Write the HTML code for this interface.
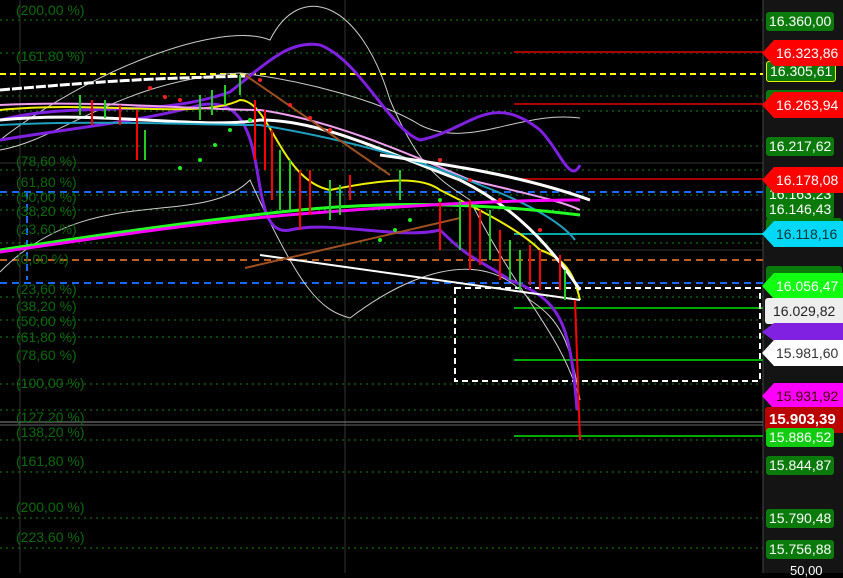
<!DOCTYPE html>
<html><head><style>
body{margin:0;background:#000;width:843px;height:573px;overflow:hidden;font-family:"Liberation Sans",sans-serif}
.l{position:absolute;left:16px;color:#0a6a0a;font-size:14px}
.p{position:absolute;left:766px;height:19px;line-height:19px;font-size:14px;padding:0 3px;border-radius:3px;background:#0a7a0a;color:#fff}
.t{position:absolute;height:26px;line-height:26px;font-size:14px;left:762px;width:81px;padding-left:14px;box-sizing:border-box;clip-path:polygon(12px 0,100% 0,100% 100%,12px 100%,0 50%)}
</style></head><body>
<svg width="843" height="573" style="position:absolute;left:0;top:0">
<rect x="763" y="0" width="80" height="573" fill="#141414"/>
<line x1="763" y1="0" x2="763" y2="573" stroke="#444"/>
<g stroke="#333" stroke-width="1"><line x1="20" y1="0" x2="20" y2="573"/><line x1="345" y1="0" x2="345" y2="573"/>
<line x1="0" y1="163" x2="763" y2="163"/><line x1="0" y1="250" x2="763" y2="250"/><line x1="0" y1="422" x2="763" y2="422" stroke="#888"/><line x1="0" y1="425" x2="763" y2="425" stroke="#666"/></g>
<g stroke="#0c8a0c" stroke-dasharray="2,4">
<line x1="0" y1="20" x2="763" y2="20"/><line x1="0" y1="53" x2="763" y2="53"/><line x1="0" y1="96" x2="763" y2="96"/><line x1="0" y1="111" x2="763" y2="111"/><line x1="0" y1="146" x2="763" y2="146"/><line x1="0" y1="170" x2="763" y2="170"/><line x1="0" y1="195" x2="763" y2="195"/><line x1="0" y1="210" x2="763" y2="210"/><line x1="0" y1="243" x2="763" y2="243"/><line x1="0" y1="297" x2="763" y2="297"/><line x1="0" y1="320" x2="763" y2="320"/><line x1="0" y1="337" x2="763" y2="337"/><line x1="0" y1="384" x2="763" y2="384"/><line x1="0" y1="410" x2="763" y2="410"/><line x1="0" y1="440" x2="763" y2="440"/><line x1="0" y1="472" x2="763" y2="472"/><line x1="0" y1="518" x2="763" y2="518"/><line x1="0" y1="548" x2="763" y2="548"/>
</g>
<line x1="0" y1="74" x2="763" y2="74" stroke="#ff0" stroke-width="2" stroke-dasharray="6,4"/>
<line x1="0" y1="192" x2="763" y2="192" stroke="#1a6aff" stroke-width="2" stroke-dasharray="7,5"/>
<line x1="0" y1="283" x2="763" y2="283" stroke="#1a6aff" stroke-width="2" stroke-dasharray="7,5"/>
<line x1="27" y1="192" x2="27" y2="280" stroke="#1a6aff" stroke-width="2" stroke-dasharray="7,5"/>
<line x1="0" y1="260" x2="763" y2="260" stroke="#c06020" stroke-width="2" stroke-dasharray="7,5"/>
<g stroke="#a00" stroke-width="2"><line x1="514" y1="52" x2="763" y2="52"/><line x1="514" y1="104" x2="763" y2="104"/><line x1="514" y1="179" x2="763" y2="179"/></g>
<line x1="514" y1="234" x2="763" y2="234" stroke="#0aa" stroke-width="2"/>
<g stroke="#0a0" stroke-width="2"><line x1="514" y1="308" x2="763" y2="308"/><line x1="514" y1="360" x2="763" y2="360"/><line x1="514" y1="436" x2="763" y2="436"/></g>
<rect x="455" y="288" width="305" height="93" fill="none" stroke="#fff" stroke-width="2" stroke-dasharray="6,4"/>
<g fill="none" stroke-width="2">
<path d="M0 150 C60 140 120 80 240 73 C300 80 380 100 420 125 C470 150 520 110 580 118" stroke="#ccc" stroke-width="1"/>
<path d="M0 140 C90 70 220 20 270 40 C300 -20 360 0 390 100 C420 170 440 180 470 200 C520 300 560 330 580 400" stroke="#ccc" stroke-width="1"/>
<path d="M0 272 C90 180 200 230 250 180 C300 290 320 310 350 318 C400 280 480 240 530 300 C560 320 570 340 580 400" stroke="#ccc" stroke-width="1"/>
<path d="M0 120 C80 100 150 120 230 92 C270 60 290 40 320 45 C360 60 390 130 420 140 C470 130 490 90 540 130 C560 150 570 185 580 165" stroke="#8020e0" stroke-width="3"/>
<path d="M0 140 C60 130 150 120 200 105 C280 90 240 240 290 230 C330 220 400 240 440 230 C470 260 480 260 510 280 C560 300 570 320 577 410" stroke="#8020e0" stroke-width="3"/>
<path d="M0 110 C100 100 200 120 240 100 C270 100 280 180 330 190 C380 180 420 175 440 190 C480 210 520 230 540 250 C570 260 575 280 580 300" stroke="#ee0" stroke-width="2"/>
<path d="M0 120 C100 110 200 130 260 120 C320 120 380 150 460 180 C500 200 540 230 580 290" stroke="#fff" stroke-width="3"/>
<path d="M0 90 C60 85 120 80 180 78 L245 76" stroke="#fff" stroke-width="3" stroke-dasharray="10,2"/>
<path d="M0 105 C100 100 200 110 260 110 C330 120 400 150 470 180 C510 190 560 200 580 210" stroke="#f0a0f0" stroke-width="2"/>
<path d="M0 125 C100 120 200 125 260 125 C350 140 420 160 480 185 C520 200 560 220 575 240" stroke="#20a0c0" stroke-width="2"/>
<path d="M0 250 C100 235 200 220 300 210 C400 200 500 205 580 215" stroke="#2f2" stroke-width="3"/>
<path d="M0 252 C100 238 200 222 300 214 C400 206 500 200 580 200" stroke="#f0f" stroke-width="3"/>
<path d="M380 155 C450 165 520 175 590 200" stroke="#fff" stroke-width="3"/>
<path d="M260 255 L580 300" stroke="#fff" stroke-width="2"/>
<path d="M245 75 L390 175" stroke="#a05020" stroke-width="2"/>
<path d="M245 268 L460 218" stroke="#a05020" stroke-width="2"/>
<path d="M575 300 L580 440" stroke="#f00" stroke-width="2"/>
</g>
<g stroke="#f00" stroke-width="2"><line x1="265" y1="110" x2="265" y2="170"/><line x1="300" y1="170" x2="300" y2="230"/><line x1="440" y1="200" x2="440" y2="250"/><line x1="470" y1="200" x2="470" y2="270"/><line x1="500" y1="230" x2="500" y2="280"/><line x1="540" y1="250" x2="540" y2="290"/><line x1="137" y1="110" x2="137" y2="160"/><line x1="92" y1="100" x2="92" y2="125"/><line x1="120" y1="105" x2="120" y2="125"/><line x1="255" y1="100" x2="255" y2="160"/><line x1="272" y1="130" x2="272" y2="200"/><line x1="310" y1="170" x2="310" y2="215"/><line x1="350" y1="175" x2="350" y2="200"/><line x1="480" y1="210" x2="480" y2="265"/><line x1="530" y1="245" x2="530" y2="285"/><line x1="560" y1="255" x2="560" y2="290"/></g>
<g stroke="#2c2" stroke-width="2"><line x1="212" y1="90" x2="212" y2="115"/><line x1="280" y1="150" x2="280" y2="210"/><line x1="330" y1="180" x2="330" y2="220"/><line x1="460" y1="200" x2="460" y2="250"/><line x1="490" y1="210" x2="490" y2="260"/><line x1="520" y1="250" x2="520" y2="290"/><line x1="145" y1="130" x2="145" y2="160"/><line x1="80" y1="95" x2="80" y2="115"/><line x1="105" y1="100" x2="105" y2="118"/><line x1="200" y1="95" x2="200" y2="120"/><line x1="225" y1="85" x2="225" y2="105"/><line x1="240" y1="75" x2="240" y2="95"/><line x1="290" y1="160" x2="290" y2="210"/><line x1="340" y1="185" x2="340" y2="215"/><line x1="400" y1="170" x2="400" y2="200"/><line x1="510" y1="240" x2="510" y2="280"/><line x1="565" y1="270" x2="565" y2="300"/></g>
<g fill="#f22"><circle cx="150" cy="88" r="2"/><circle cx="180" cy="100" r="2"/><circle cx="260" cy="80" r="2"/><circle cx="290" cy="105" r="2"/><circle cx="330" cy="130" r="2"/><circle cx="440" cy="160" r="2"/><circle cx="500" cy="200" r="2"/><circle cx="540" cy="230" r="2"/><circle cx="165" cy="97" r="2"/><circle cx="310" cy="118" r="2"/><circle cx="470" cy="180" r="2"/></g>
<g fill="#2e2"><circle cx="180" cy="168" r="2"/><circle cx="200" cy="160" r="2"/><circle cx="230" cy="130" r="2"/><circle cx="250" cy="120" r="2"/><circle cx="380" cy="240" r="2"/><circle cx="410" cy="220" r="2"/><circle cx="440" cy="200" r="2"/><circle cx="215" cy="145" r="2"/><circle cx="395" cy="230" r="2"/></g>
</svg>
<div class="l" style="top:2px">(200,00 %)</div><div class="l" style="top:48px">(161,80 %)</div>
<div class="l" style="top:153px">(78,60 %)</div><div class="l" style="top:174px">(61,80 %)</div>
<div class="l" style="top:189px">(50,00 %)</div><div class="l" style="top:203px">(38,20 %)</div>
<div class="l" style="top:221px">(23,60 %)</div><div class="l" style="top:251px">(0,00 %)</div>
<div class="l" style="top:281px">(23,60 %)</div><div class="l" style="top:298px">(38,20 %)</div>
<div class="l" style="top:313px">(50,00 %)</div><div class="l" style="top:329px">(61,80 %)</div>
<div class="l" style="top:347px">(78,60 %)</div><div class="l" style="top:375px">(100,00 %)</div>
<div class="l" style="top:409px">(127,20 %)</div><div class="l" style="top:424px">(138,20 %)</div>
<div class="l" style="top:453px">(161,80 %)</div><div class="l" style="top:499px">(200,00 %)</div>
<div class="l" style="top:529px">(223,60 %)</div>
<div class="p" style="top:12px">16.360,00</div>
<div class="p" style="top:61px;border:1px solid #ee0">16.305,61</div>
<div class="p" style="top:90px;width:70px"></div>
<div class="p" style="top:137px">16.217,62</div>
<div class="p" style="top:185px">16.163,23</div>
<div class="p" style="top:200px">16.146,43</div>
<div class="p" style="top:218px;width:70px"></div>
<div class="p" style="top:266px;width:70px"></div>
<div class="p" style="top:456px">15.844,87</div>
<div class="p" style="top:509px">15.790,48</div>
<div class="p" style="top:540px">15.756,88</div>
<div style="position:absolute;left:790px;top:563px;color:#fff;font-size:13px">50,00</div>
<div class="t" style="top:40px;background:#f00;color:#fff">16.323,86</div>
<div class="t" style="top:92px;background:#f00;color:#fff">16.263,94</div>
<div class="t" style="top:167px;background:#f00;color:#fff">16.178,08</div>
<div class="t" style="top:221px;background:#00d8f8;color:#033">16.118,16</div>
<div class="t" style="top:273px;background:#1f1;color:#fff">16.056,47</div>
<div class="t" style="top:298px;background:#eee;color:#222;left:765px;clip-path:none;border-radius:3px;padding-left:8px">16.029,82</div>
<div class="t" style="top:323px;background:#8020e0;height:18px"></div>
<div class="t" style="top:340px;background:#fff;color:#333">15.981,60</div>
<div class="t" style="top:383px;background:#f0f;color:#400">15.931,92</div>
<div class="t" style="top:407px;background:#b00;color:#fff;left:765px;clip-path:none;border-radius:3px;padding-left:4px;font-weight:bold;font-size:15px">15.903,39</div>
<div class="p" style="top:428px;background:#1c1">15.886,52</div>
</body></html>
